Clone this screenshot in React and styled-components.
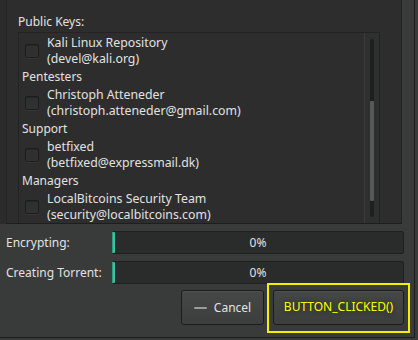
import styled, { createGlobalStyle } from "styled-components";

const Global = createGlobalStyle`
  html, body {
    margin: 0;
    padding: 0;
    background: #393b3a;
  }
  body {
    font-family: "Noto Sans", "DejaVu Sans", sans-serif;
    font-size: 12px;
    color: #e2e2e2;
  }
`;

const Window = styled.div`
  width: 414px;
  height: 337px;
  border-right: 1px solid #1c1c1c;
  border-bottom: 1px solid #1c1c1c;
  background: #393b3a;
  display: flex;
  flex-direction: column;
  overflow: hidden;
`;

const Top = styled.div`
  height: 224px;
  display: flex;
`;

const LeftStrip = styled.div`
  width: 6px;
  background: #2a2b2b;
`;

const Frame = styled.div`
  width: 396px;
  background: #2d2d2d;
  border-left: 1px solid #262626;
  border-right: 1px solid #222222;
  border-bottom: 1px solid #1e1e1e;
  padding: 14px 0 0 11px;
  box-sizing: border-box;
  display: flex;
  flex-direction: column;
`;

const Label = styled.div`
  line-height: 16px;
  height: 16px;
  margin-bottom: 2px;
`;

const ListBox = styled.div`
  width: 362px;
  flex: 1;
  border: 1px solid #232323;
  border-bottom: none;
  box-sizing: border-box;
  display: flex;
  overflow: hidden;
`;

const Items = styled.div`
  flex: 1;
  padding-top: 1px;
`;

const Header = styled.div`
  height: 18px;
  line-height: 18px;
  padding-left: 3px;
`;

const Item = styled.div`
  height: 34px;
  display: flex;
  align-items: center;
  padding-left: 6px;
  gap: 8px;
`;

const Check = styled.div`
  width: 12px;
  height: 12px;
  border: 1px solid #1d1d1d;
  border-radius: 2px;
  background: #2f3030;
  box-shadow: inset 0 1px 0 #262626, 0 1px 0 #353535;
`;

const Lines = styled.div`
  line-height: 16px;
  font-size: 12.3px;
`;

const ScrollBar = styled.div`
  width: 15px;
  border-left: 1px solid #3a3b3b;
  background: #2e2f2f;
  display: flex;
  justify-content: center;
  padding: 6px 0 6px;
  box-sizing: border-box;
`;

const Groove = styled.div`
  width: 4px;
  border-radius: 2px;
  background: #1e1f1f;
  display: flex;
  flex-direction: column;
  padding-top: 62px;
  padding-bottom: 16px;
  box-sizing: border-box;
`;

const Handle = styled.div`
  flex: 1;
  background: #575958;
  border-radius: 1px;
`;

const RightGap = styled.div`
  flex: 1;
  background: #393b3a;
`;

const Bottom = styled.div`
  flex: 1;
  padding: 7px 10px 0 6px;
  display: grid;
  grid-template-columns: 106px 1fr;
  grid-auto-rows: 23px;
  row-gap: 7px;
  align-items: center;
`;

const BarLabel = styled.div`
  line-height: 16px;
`;

const Bar = styled.div`
  height: 23px;
  background: #2a2b2b;
  border: 1px solid #1f2020;
  border-radius: 2px;
  box-sizing: border-box;
  display: grid;
`;

const Chunk = styled.div`
  grid-area: 1 / 1;
  width: 3px;
  margin: 0 0 0 -1px;
  border-radius: 1px;
  background: #35c49d;
  box-shadow: inset 1px 0 0 #2a9c7c;
`;

const BarText = styled.div`
  grid-area: 1 / 1;
  text-align: center;
  line-height: 21px;
`;

const Buttons = styled.div`
  grid-column: 1 / -1;
  display: flex;
  justify-content: flex-end;
  align-items: flex-start;
  gap: 3px;
  margin-top: -1px;
  margin-right: -6px;
  height: 35px;
  align-self: start;
`;

const Focus = styled.div`
  border: 2px solid #f2f200;
  padding: 5px 4px 6px 4px;
  margin-top: -7px;
`;

const Button = styled.button`
  width: ${(p) => p.$w}px;
  height: 35px;
  border: 1px solid #1c1c1c;
  border-radius: 3px;
  background: linear-gradient(#464847, #3c3e3d);
  box-shadow: inset 0 1px 0 #505251;
  color: ${(p) => (p.$active ? "#ffff00" : "#e2e2e2")};
  font-family: "Noto Sans", "DejaVu Sans", sans-serif;
  font-size: 12px;
  display: flex;
  align-items: center;
  justify-content: center;
  gap: 7px;
  padding: 0;
`;

const Minus = styled.span`
  width: 13px;
  height: 2px;
  background: #9a9b9a;
  border-radius: 1px;
`;

const Glow = styled.span`
  margin-top: -3px;
  text-shadow: 0 0 5px rgba(0, 0, 0, 0.5);
`;

const keys = [
  { header: null, name: "Kali Linux Repository", mail: "devel@kali.org" },
  { header: "Pentesters", name: "Christoph Atteneder", mail: "christoph.atteneder@gmail.com" },
  { header: "Support", name: "betfixed", mail: "betfixed@expressmail.dk" },
  { header: "Managers", name: "LocalBitcoins Security Team", mail: "security@localbitcoins.com" },
];

export default function App() {
  return (
    <>
      <Global />
      <Window>
        <Top>
          <LeftStrip />
          <Frame>
            <Label>Public Keys:</Label>
            <ListBox>
              <Items>
                {keys.map((k) => (
                  <div key={k.name}>
                    {k.header && <Header>{k.header}</Header>}
                    <Item>
                      <Check />
                      <Lines>
                        <div>{k.name}</div>
                        <div>({k.mail})</div>
                      </Lines>
                    </Item>
                  </div>
                ))}
              </Items>
              <ScrollBar>
                <Groove>
                  <Handle />
                </Groove>
              </ScrollBar>
            </ListBox>
          </Frame>
          <RightGap />
        </Top>
        <Bottom>
          <BarLabel>Encrypting:</BarLabel>
          <Bar>
            <Chunk />
            <BarText>0%</BarText>
          </Bar>
          <BarLabel>Creating Torrent:</BarLabel>
          <Bar>
            <Chunk />
            <BarText>0%</BarText>
          </Bar>
          <Buttons>
            <Button $w={83}>
              <Minus />
              Cancel
            </Button>
            <Focus>
              <Button $w={131} $active>
                <Glow>BUTTON_CLICKED()</Glow>
              </Button>
            </Focus>
          </Buttons>
        </Bottom>
      </Window>
    </>
  );
}
